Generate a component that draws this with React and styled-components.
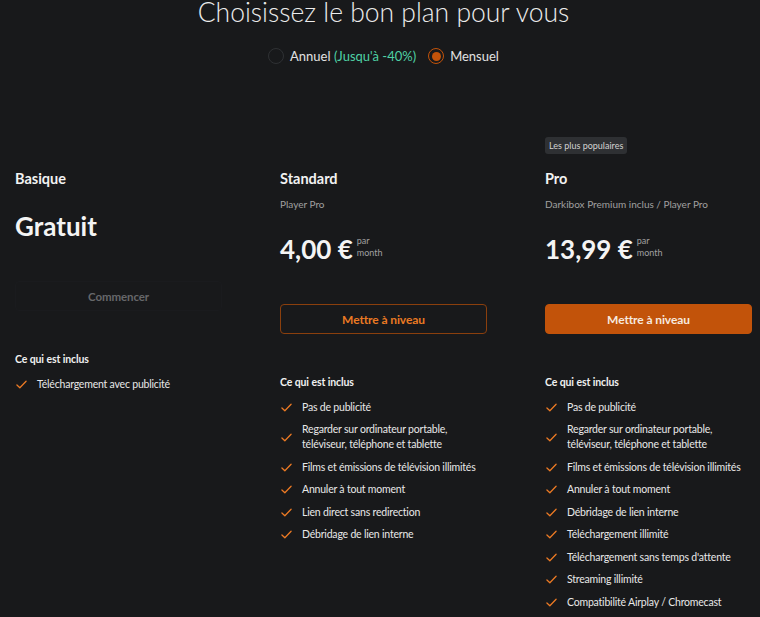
import React from "react";
import styled, { createGlobalStyle } from "styled-components";

const Global = createGlobalStyle`
  html, body { margin: 0; padding: 0; background: #18191b; }
  body { font-family: Lato, "Open Sans", sans-serif; color: #e8e8e8; overflow: hidden; }
  * { box-sizing: border-box; }
`;

const Page = styled.div`
  width: 760px;
  height: 617px;
  background: #18191b;
  overflow: hidden;
  padding: 0 8px 0 15px;
`;

const Title = styled.h1`
  margin: -4px 0 0;
  font-size: 26.5px;
  line-height: 32px;
  font-weight: 300;
  text-align: center;
  color: #ececec;
`;

const Toggle = styled.div`
  display: flex;
  justify-content: center;
  align-items: center;
  gap: 12px;
  margin-top: 18px;
  height: 20px;
`;

const Option = styled.label`
  display: flex;
  align-items: center;
  gap: 6px;
  font-size: 13px;
  color: #e2e2e2;
`;

const Radio = styled.span`
  width: 16px;
  height: 16px;
  border-radius: 50%;
  border: 1.5px solid ${(p) => (p.$checked ? "#c2530a" : "#2f3134")};
  display: flex;
  align-items: center;
  justify-content: center;
  &::after {
    content: "";
    width: 9px;
    height: 9px;
    border-radius: 50%;
    background: ${(p) => (p.$checked ? "#c2530a" : "transparent")};
  }
`;

const Deal = styled.span`
  color: #4fd1a5;
`;

const Grid = styled.div`
  display: grid;
  grid-template-columns: repeat(3, 207px);
  column-gap: 58px;
  margin-top: 71px;
`;

const Card = styled.div`
  display: flex;
  flex-direction: column;
`;

const BadgeSlot = styled.div`
  height: 32px;
  display: flex;
  align-items: flex-start;
`;

const Badge = styled.span`
  display: inline-flex;
  align-items: center;
  height: 17px;
  padding: 0 4px;
  border-radius: 3px;
  background: #2e3033;
  color: #d2d2d2;
  font-size: 9px;
`;

const Name = styled.div`
  font-size: 14.5px;
  line-height: 20px;
  font-weight: 700;
  color: #f2f2f2;
`;

const Sub = styled.div`
  margin-top: 7px;
  font-size: 10px;
  line-height: 16px;
  color: #a0a0a0;
`;

const PriceRow = styled.div`
  margin-top: 21px;
  display: flex;
  align-items: center;
  gap: 4px;
  height: 32px;
`;

const Price = styled.span`
  font-size: 26px;
  line-height: 32px;
  font-weight: 700;
  color: #f4f4f4;
`;

const Per = styled.span`
  font-size: 9px;
  line-height: 12px;
  color: #a0a0a0;
  margin-top: -4px;
`;

const Button = styled.button`
  margin-top: 39px;
  height: 30px;
  width: 100%;
  border-radius: 4px;
  font-family: inherit;
  font-size: ${(p) => (p.$variant === "ghost" ? "11.5px" : "12px")};
  letter-spacing: -0.1px;
  font-weight: 700;
  cursor: pointer;
  border: 1px solid
    ${(p) => (p.$variant === "solid" ? "#c2530a" : p.$variant === "outline" ? "#8a3f0d" : "#1a1b1e")};
  background: ${(p) => (p.$variant === "solid" ? "#c2530a" : p.$variant === "outline" ? "transparent" : "#18191b")};
  color: ${(p) => (p.$variant === "solid" ? "#f6e9df" : p.$variant === "outline" ? "#ea7a23" : "#66676a")};
`;

const Heading = styled.div`
  margin-top: 40px;
  font-size: 10.5px;
  letter-spacing: -0.1px;
  line-height: 16px;
  font-weight: 700;
  color: #f0f0f0;
`;

const List = styled.ul`
  list-style: none;
  margin: 9.5px 0 0;
  padding: 0;
  display: flex;
  flex-direction: column;
  gap: 7.5px;
`;

const Item = styled.li`
  display: flex;
  align-items: center;
  gap: 10px;
  font-size: 10.5px;
  letter-spacing: -0.2px;
  line-height: 15px;
  color: #e8e8e8;
`;

const CheckIcon = styled.svg`
  flex: none;
  width: 11px;
  height: 11px;
  margin-left: 1px;
`;

const Check = () => (
  <CheckIcon viewBox="0 0 12 12" fill="none">
    <path d="M1 6.5 L4.2 9.5 L11 2.5" stroke="#ec7a24" strokeWidth="1.4" strokeLinecap="round" strokeLinejoin="round" />
  </CheckIcon>
);

const plans = [
  {
    name: "Basique",
    price: "Gratuit",
    button: "Commencer",
    variant: "ghost",
    features: ["Téléchargement avec publicité"],
  },
  {
    name: "Standard",
    sub: "Player Pro",
    price: "4,00 €",
    per: true,
    button: "Mettre à niveau",
    variant: "outline",
    features: [
      "Pas de publicité",
      "Regarder sur ordinateur portable, téléviseur, téléphone et tablette",
      "Films et émissions de télévision illimités",
      "Annuler à tout moment",
      "Lien direct sans redirection",
      "Débridage de lien interne",
    ],
  },
  {
    name: "Pro",
    badge: "Les plus populaires",
    sub: "Darkibox Premium inclus / Player Pro",
    price: "13,99 €",
    per: true,
    button: "Mettre à niveau",
    variant: "solid",
    features: [
      "Pas de publicité",
      "Regarder sur ordinateur portable, téléviseur, téléphone et tablette",
      "Films et émissions de télévision illimités",
      "Annuler à tout moment",
      "Débridage de lien interne",
      "Téléchargement illimité",
      "Téléchargement sans temps d'attente",
      "Streaming illimité",
      "Compatibilité Airplay / Chromecast",
    ],
  },
];

export default function App() {
  return (
    <Page>
      <Global />
      <Title>Choisissez le bon plan pour vous</Title>
      <Toggle>
        <Option>
          <Radio />
          <span>
            Annuel <Deal>(Jusqu'à -40%)</Deal>
          </span>
        </Option>
        <Option>
          <Radio $checked />
          <span>Mensuel</span>
        </Option>
      </Toggle>
      <Grid>
        {plans.map((p) => (
          <Card key={p.name}>
            <BadgeSlot>{p.badge && <Badge>{p.badge}</Badge>}</BadgeSlot>
            <Name>{p.name}</Name>
            {p.sub && <Sub>{p.sub}</Sub>}
            <PriceRow>
              <Price>{p.price}</Price>
              {p.per && (
                <Per>
                  par
                  <br />
                  month
                </Per>
              )}
            </PriceRow>
            <Button $variant={p.variant}>{p.button}</Button>
            <Heading>Ce qui est inclus</Heading>
            <List>
              {p.features.map((f) => (
                <Item key={f}>
                  <Check />
                  <span>{f}</span>
                </Item>
              ))}
            </List>
          </Card>
        ))}
      </Grid>
    </Page>
  );
}
